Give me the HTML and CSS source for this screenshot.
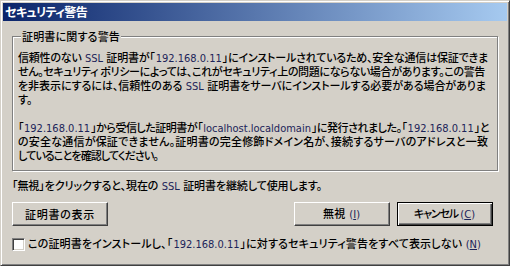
FILE: index.html
```html
<!DOCTYPE html>
<html lang="ja">
<head>
  <meta charset="UTF-8" />
  <title>セキュリティ警告</title>
  <link rel="stylesheet" href="styles.css">
</head>
<body>

  <div class="window">
    <div class="titlebar"><span class="fit" data-w="82">セキュリティ警告</span></div>

    <div class="content">
      <div class="group">
        <span class="legend fit" data-w="98">証明書に関する警告</span>
        <p class="message">
          <span class="line fit" data-w="470">信頼性のない <span class="en">SSL</span> 証明書が「<span class="en">192.168.0.11</span>」にインストールされているため、安全な通信は保証できま</span>
          <span class="line fit" data-w="467">せん。セキュリティ ポリシーによっては、これがセキュリティ上の問題にならない場合があります。この警告</span>
          <span class="line fit" data-w="468">を非表示にするには、信頼性のある <span class="en">SSL</span> 証明書をサーバにインストールする必要がある場合がありま</span>
          <span class="line">す。</span>
        </p>
        <p class="message">
          <span class="line fit" data-w="471">「<span class="en">192.168.0.11</span>」から受信した証明書が「<span class="en">localhost.localdomain</span>」に発行されました。「<span class="en">192.168.0.11</span>」と</span>
          <span class="line fit" data-w="470">の安全な通信が保証できません。証明書の完全修飾ドメイン名が、接続するサーバのアドレスと一致</span>
          <span class="line fit" data-w="140">していることを確認してください。</span>
        </p>
      </div>

      <p class="note"><span class="fit" data-w="310">「無視」をクリックすると、現在の <span class="en">SSL</span> 証明書を継続して使用します。</span></p>

      <div class="buttons">
        <button class="btn"><span class="fit" data-w="70">証明書の表示</span></button>
        <button class="btn push"><span class="fit" data-w="38">無視 <span class="en">(<u>I</u>)</span></span></button>
        <button class="btn default"><span class="fit" data-w="62">キャンセル <span class="en">(<u>C</u>)</span></span></button>
      </div>

      <label class="check">
        <span class="box"></span>
        <span class="fit" data-w="454">この証明書をインストールし、「<span class="en">192.168.0.11</span>」に対するセキュリティ警告をすべて表示しない <span class="en">(<u>N</u>)</span></span>
      </label>
    </div>
  </div>

  <script>
    // squeeze the Japanese text of each run to the width it has in the original dialog
    document.querySelectorAll('.fit').forEach(el => {
      const range = document.createRange();
      range.selectNodeContents(el);
      const natural = range.getBoundingClientRect().width;
      let chars = el.textContent.replace(/\s+/g, ' ').trim().length;
      el.querySelectorAll('.en').forEach(en => { chars -= en.textContent.length; });
      const target = Number(el.dataset.w);
      el.style.letterSpacing = ((target - natural) / chars).toFixed(2) + 'px';
    });
  </script>

</body>
</html>
```

FILE: styles.css
```css
body {
  margin: 0;
  background: #d4d0c8;
  font-family: "Noto Sans CJK JP", sans-serif;
  font-size: 11px;
  font-weight: 500;
  font-feature-settings: "palt" 1;
  color: #000;
}

.window {
  width: 510px;
  height: 266px;
  box-sizing: border-box;
  border: 1px solid;
  border-color: #d4d0c8 #404040 #404040 #d4d0c8;
  box-shadow: inset 1px 1px #fff, inset -1px -1px #808080;
  padding: 2px;
  background: #d4d0c8;
  overflow: hidden;
}

.titlebar {
  height: 18px;
  line-height: 18px;
  padding-left: 2px;
  background: linear-gradient(to right, #0a246a, #a6caf0);
  color: #fff;
  font-size: 12px;
  font-weight: bold;
  white-space: nowrap;
}

.content {
  padding: 0 9px;
}

.fit {
  white-space: nowrap;
}

.en {
  font-family: "DejaVu Sans Condensed", "DejaVu Sans", sans-serif;
  font-size: 11px;
  font-weight: normal;
  letter-spacing: 0;
  padding: 0 1px;
  color: #1c2459;
}

.group {
  position: relative;
  margin-top: 15px;
  padding: 13px 4px 8px 5px;
  border: 1px solid #808080;
  box-shadow: 1px 1px 0 #fff, inset 1px 1px 0 #fff;
}

.legend {
  position: absolute;
  top: -8px;
  left: 8px;
  padding: 0 1px;
  height: 14px;
  line-height: 14px;
  background: #d4d0c8;
}

.message {
  margin: 0;
}

.message + .message {
  margin-top: 14px;
}

.line {
  display: block;
  height: 14px;
  line-height: 14px;
}

.note {
  margin: 7px 0 0;
  height: 14px;
  line-height: 14px;
}

.buttons {
  display: flex;
  gap: 7px;
  margin-top: 10px;
  padding-right: 5px;
}

.btn {
  width: 96px;
  height: 24px;
  padding: 0;
  font: inherit;
  line-height: 14px;
  color: #000;
  background: #d4d0c8;
  border: 1px solid;
  border-color: #fff #404040 #404040 #fff;
  box-shadow: inset -1px -1px #808080;
}

.btn u {
  text-decoration-thickness: 1px;
}

.push {
  margin-left: auto;
}

.default {
  border: 1px solid #000;
  box-shadow: inset 1px 1px #fff, inset -1px -1px #404040, inset -2px -2px #808080;
}

.check {
  display: flex;
  align-items: center;
  gap: 3px;
  margin-top: 11px;
  height: 14px;
  line-height: 14px;
}

.box {
  flex: none;
  width: 9px;
  height: 9px;
  padding: 1px;
  background: #fff;
  border: 1px solid;
  border-color: #808080 #fff #fff #808080;
  box-shadow: inset 1px 1px #404040, inset -1px -1px #d4d0c8;
}
```
